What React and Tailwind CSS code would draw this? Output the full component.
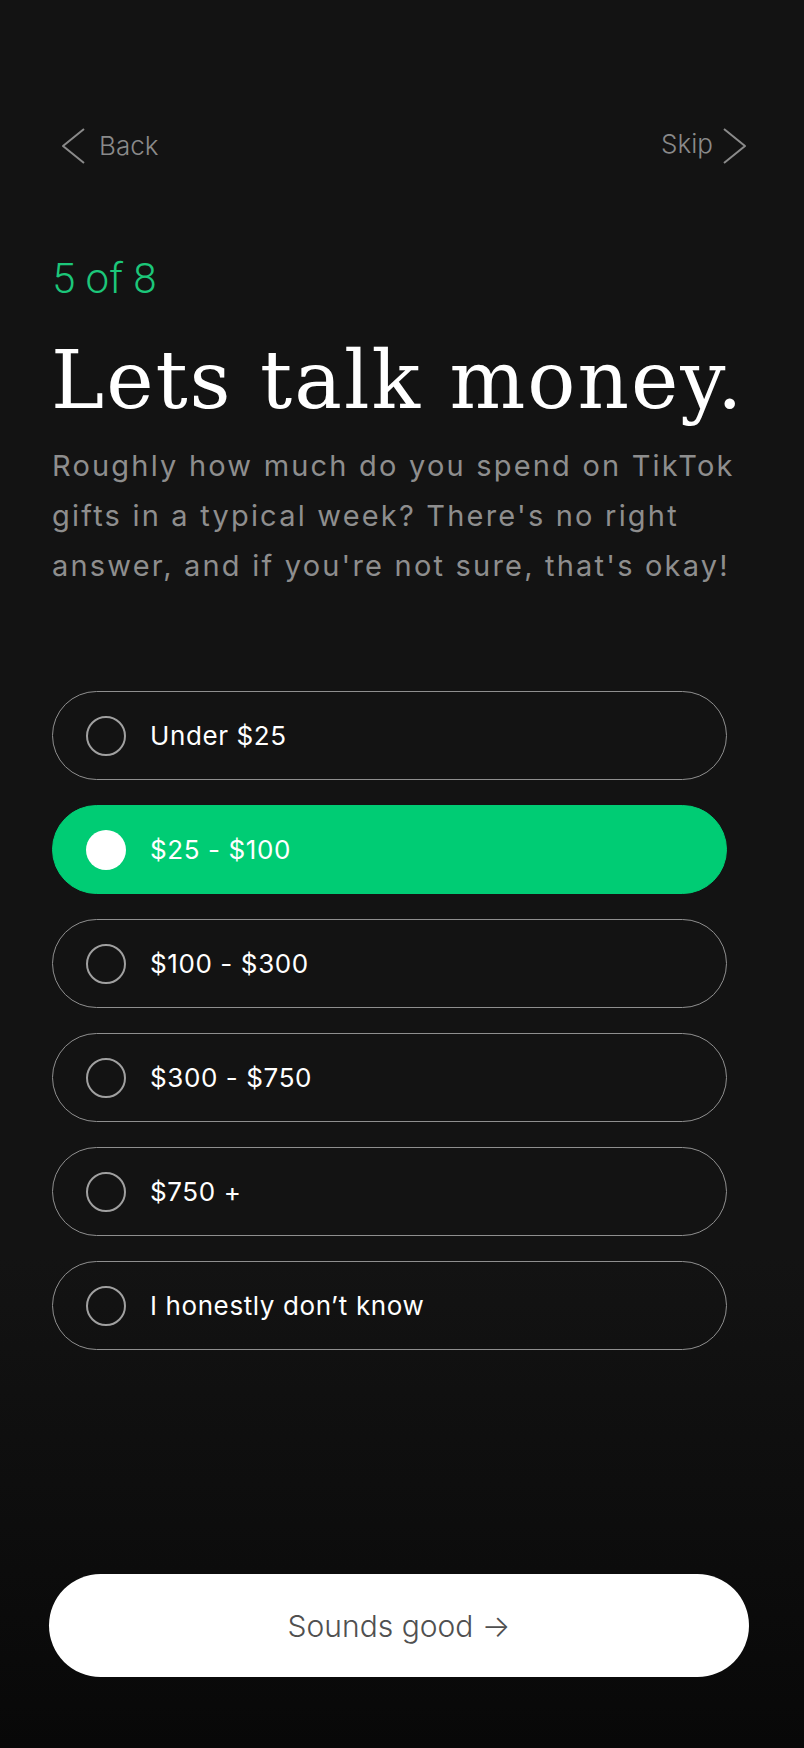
import React from "react";

const options = [
  "Under $25",
  "$25 - $100",
  "$100 - $300",
  "$300 - $750",
  "$750 +",
  "I honestly don\u2019t know",
];

export default function App() {
  const selected = 1;
  return (
    <div
      className="w-[804px] min-h-[1748px] flex flex-col bg-[linear-gradient(180deg,#131313_0%,#131313_72%,#080808_100%)]"
      style={{ fontFamily: "Inter, 'Noto Sans', sans-serif" }}
    >
      {/* Nav */}
      <div className="mt-[126px] ml-[61px] w-[686px] h-[40px] flex items-center justify-between">
        <div className="flex items-center gap-[14px]">
          <svg width="24" height="36" viewBox="0 0 24 36" fill="none">
            <path d="M23 1 L2 18 L23 35" stroke="#8a8a8a" strokeWidth="2" strokeLinejoin="round" />
          </svg>
          <span className="text-[26px] leading-none text-[#8a8a8a] font-light">Back</span>
        </div>
        <div className="flex items-center gap-[10px]">
          <span className="text-[26px] leading-none text-[#8a8a8a] font-light -mt-[4px]">Skip</span>
          <svg width="24" height="36" viewBox="0 0 24 36" fill="none">
            <path d="M1 1 L22 18 L1 35" stroke="#8a8a8a" strokeWidth="2" strokeLinejoin="round" />
          </svg>
        </div>
      </div>

      {/* Step */}
      <div
        className="mt-[92px] ml-[52px] text-[42px] leading-none font-light text-[#1cc77a]"
        style={{ fontFamily: "Roboto, sans-serif" }}
      >
        5 of 8
      </div>

      {/* Heading */}
      <h1
        className="mt-[41px] ml-[51px] text-[80px] leading-none text-white tracking-[2px] whitespace-nowrap"
        style={{ fontFamily: "'DejaVu Serif', serif" }}
      >
        Lets talk money.
      </h1>

      {/* Body */}
      <p className="mt-[20px] ml-[52px] w-[720px] text-[29px] leading-[50px] text-[#8e8e8e] font-normal tracking-[2.2px]">
        Roughly how much do you spend on TikTok gifts in a typical week? There's no right answer, and if you're not sure, that's okay!
      </p>

      {/* Options */}
      <div className="mt-[100px] ml-[52px] w-[675px] flex flex-col gap-[25px]">
        {options.map((o, i) => {
          const on = i === selected;
          return (
            <div
              key={o}
              className={
                on
                  ? "h-[89px] rounded-full border border-[#00cc74] bg-[#00cc74] flex items-center pl-[33px]"
                  : "h-[89px] rounded-full border border-[#8f8f8f] flex items-center pl-[33px]"
              }
            >
              <div
                className={
                  on
                    ? "w-[40px] h-[40px] rounded-full bg-white shrink-0"
                    : "w-[40px] h-[40px] rounded-full border-2 border-[#a0a0a0] shrink-0"
                }
              />
              <span className="ml-[24px] text-[26px] leading-none text-white tracking-[0.6px]">{o}</span>
            </div>
          );
        })}
      </div>

      {/* Button */}
      <button className="mt-auto mb-[71px] ml-[49px] w-[700px] h-[103px] rounded-full bg-white flex items-center justify-center">
        <span className="text-[30px] leading-none text-[#505050] font-light">Sounds good →</span>
      </button>
    </div>
  );
}
